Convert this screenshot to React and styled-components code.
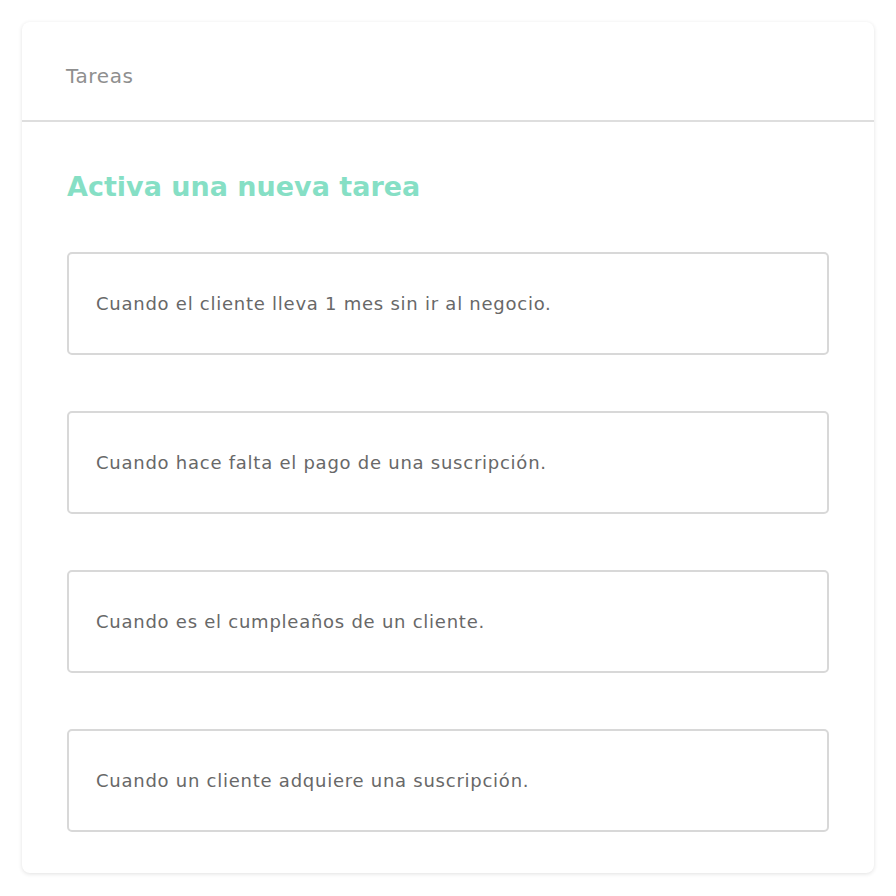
import React from "react";
import styled, { createGlobalStyle } from "styled-components";

const Global = createGlobalStyle`
  html, body { margin: 0; padding: 0; background: #fff; }
  body { font-family: "DejaVu Sans", "Liberation Sans", sans-serif; }
  * { box-sizing: border-box; }
`;

const Page = styled.div`
  padding: 22px 22px 22px 22px;
`;

const Card = styled.section`
  width: 852px;
  background: #fff;
  border-radius: 8px;
  box-shadow: 0 1px 4px rgba(0, 0, 0, 0.12);
  overflow: hidden;
`;

const Header = styled.header`
  height: 100px;
  padding: 40px 44px 0;
  border-bottom: 2px solid #dedede;
  font-size: 20px;
  font-weight: 400;
  letter-spacing: 0.6px;
  color: #8f8f8f;
  line-height: 28px;
`;

const Body = styled.div`
  padding: 48px 45px 41px;
`;

const Title = styled.h2`
  margin: 0 0 48px;
  font-size: 27px;
  font-weight: 600;
  line-height: 34px;
  color: #86dfc5;
`;

const List = styled.div`
  display: flex;
  flex-direction: column;
  gap: 56px;
`;

const Option = styled.div`
  height: 103px;
  border: 2px solid #d8d8d8;
  border-radius: 5px;
  display: flex;
  align-items: center;
  padding: 0 27px;
  font-size: 18px;
  letter-spacing: 0.75px;
  color: #686868;
`;

const items = [
  "Cuando el cliente lleva 1 mes sin ir al negocio.",
  "Cuando hace falta el pago de una suscripción.",
  "Cuando es el cumpleaños de un cliente.",
  "Cuando un cliente adquiere una suscripción.",
];

export default function App() {
  return (
    <>
      <Global />
      <Page>
        <Card>
          <Header>Tareas</Header>
          <Body>
            <Title>Activa una nueva tarea</Title>
            <List>
              {items.map((t) => (
                <Option key={t}>{t}</Option>
              ))}
            </List>
          </Body>
        </Card>
      </Page>
    </>
  );
}
